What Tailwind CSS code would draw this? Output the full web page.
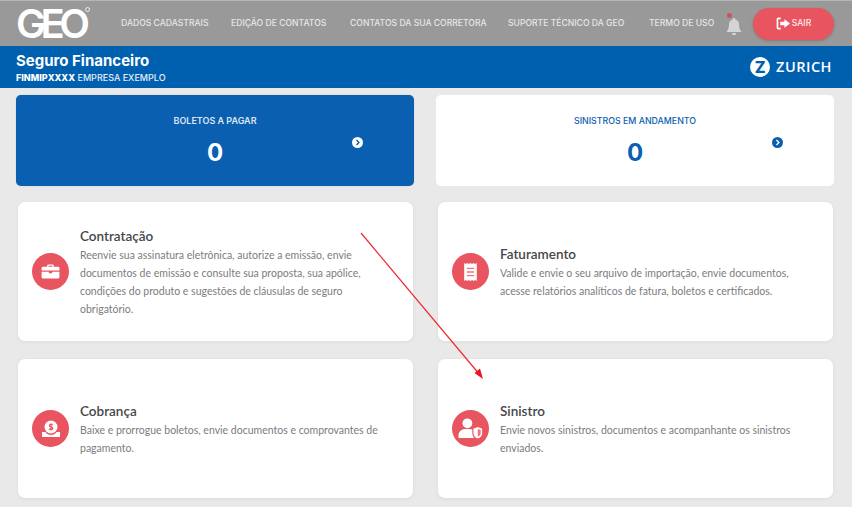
<!DOCTYPE html>
<html lang="pt-BR">
<head>
<meta charset="UTF-8">
<title>Seguro Financeiro</title>
<script src="https://cdn.jsdelivr.net/npm/@tailwindcss/browser@4"></script>
</head>
<body class="relative w-[852px] h-[507px] overflow-hidden bg-[#eae9ea] font-['Inter',sans-serif]">
  <!-- top nav -->
  <header class="flex items-center h-[46px] bg-[#999999] border-t border-[#b5b5b5] pl-[16px]">
    <div class="relative w-[74px] h-[38px] flex items-center">
      <span class="text-[40px] leading-[38px] font-semibold tracking-[-5.500px] text-white">GEO</span>
      <span class="absolute right-[0px] top-[2px] w-[5px] h-[5px] rounded-full border border-white/80"></span>
    </div>
    <nav class="flex items-center ml-[31px] text-[8.600px] font-medium text-[#e6e6e6] whitespace-nowrap">
      <a class="w-[110px]">DADOS CADASTRAIS</a>
      <a class="w-[119px]">EDIÇÃO DE CONTATOS</a>
      <a class="w-[158px]">CONTATOS DA SUA CORRETORA</a>
      <a class="w-[141px]">SUPORTE TÉCNICO DA GEO</a>
      <a class="w-[76px]">TERMO DE USO</a>
    </nav>
    <div class="relative ml-[1px] w-[16px] h-[22px] mt-[2px]">
      <svg viewBox="0 0 16 20" class="w-[16px] h-[20px] mt-[3px]" fill="#d4d4d4"><path d="M8 1c.9 0 1.400.6 1.400 1.400C11.800 3 13 5 13 7.500c0 3.500 1 5.500 2.500 7.500H.5C2 13 3 11 3 7.500 3 5 4.200 3 6.600 2.400 6.600 1.600 7.100 1 8 1zM5.800 16h4.400c0 1.300-1 2.200-2.200 2.200S5.800 17.300 5.800 16z"/></svg>
      <span class="absolute left-[1px] top-[-1px] w-[5px] h-[5px] rounded-full bg-[#c9565f]"></span>
    </div>
    <button class="flex items-center justify-center ml-[11px] w-[81px] h-[32px] rounded-full bg-[#e8545f] shadow-[0_1px_3px_rgba(0,0,0,0.2)] text-white/90 text-[8.600px] font-medium">
      <svg viewBox="0 0 16 14" class="w-[15px] h-[13px] mr-[1px]" fill="none"><path d="M5 1.500H2.500a1 1 0 0 0-1 1v9a1 1 0 0 0 1 1H5" stroke="#fff" stroke-width="1.800"/><path d="M4.500 5.200h4.500V2.500L15 7l-6 4.500V8.800H4.500z" fill="#fff"/></svg>
      SAIR
    </button>
  </header>

  <!-- blue title bar -->
  <section class="flex items-center justify-between h-[42px] bg-[#0060b0] pl-[16px] pr-[20px] text-white">
    <div>
      <h1 class="text-[15px] leading-[18px] font-bold">Seguro Financeiro</h1>
      <p class="mt-[3px] text-[9px] leading-[10px] font-medium text-white/90"><b class="font-extrabold text-white">FINMIPXXXX</b> EMPRESA EXEMPLO</p>
    </div>
    <div class="flex items-center gap-[6px]">
      <span class="flex items-center justify-center w-[20px] h-[20px] rounded-full bg-white text-[#0060b0] text-[16px] leading-none font-extrabold">Z</span>
      <span class="text-[14.500px] leading-none font-semibold font-['Open_Sans',sans-serif] tracking-[0.5px]">ZURICH</span>
    </div>
  </section>

  <!-- counters -->
  <section class="grid grid-cols-[398px_398px] gap-[22px] pl-[16px] pt-[7px]">
    <div class="grid grid-cols-[1fr_auto_1fr] items-center h-[91px] rounded-[5px] bg-[#0a5fb0] text-white shadow-[0_0_1px_rgba(0,0,0,0.3)]">
      <span></span>
      <div class="text-center -mt-[1px]">
        <p class="text-[9px] leading-[10px] font-semibold text-[#dbe6f3]">BOLETOS A PAGAR</p>
        <p class="mt-[15px] text-[24px] leading-[24px] font-bold">0</p>
      </div>
      <span class="justify-self-end mr-[51.500px] mt-[3px] flex items-center justify-center w-[11px] h-[11px] rounded-full bg-white">
        <svg viewBox="0 0 10 10" class="w-[7px] h-[7px]" fill="none" stroke="#0a5fb0" stroke-width="2"><path d="M3.500 1.500 7 5 3.500 8.500"/></svg>
      </span>
    </div>
    <div class="grid grid-cols-[1fr_auto_1fr] items-center h-[91px] rounded-[5px] bg-white text-[#0a5fb0]">
      <span></span>
      <div class="text-center -mt-[1px]">
        <p class="text-[8.800px] leading-[10px] font-medium">SINISTROS EM ANDAMENTO</p>
        <p class="mt-[15px] text-[24px] leading-[24px] font-bold">0</p>
      </div>
      <span class="justify-self-end mr-[51.500px] mt-[3px] flex items-center justify-center w-[11px] h-[11px] rounded-full bg-[#0a5fb0]">
        <svg viewBox="0 0 10 10" class="w-[7px] h-[7px]" fill="none" stroke="#fff" stroke-width="2"><path d="M3.500 1.500 7 5 3.500 8.500"/></svg>
      </span>
    </div>
  </section>

  <!-- menu cards -->
  <main class="grid grid-cols-[395.500px_395.500px] gap-x-[24.500px] gap-y-[18px] pl-[17.500px] pt-[16px] font-['Lato',sans-serif]">
    <article class="flex items-center h-[139px] rounded-[7px] bg-white shadow-[0_1px_4px_rgba(0,0,0,0.06)] pl-[14.500px] pr-[30px]">
      <span class="flex items-center justify-center shrink-0 w-[37px] h-[37px] rounded-full bg-[#e8545f]">
        <svg viewBox="0 0 20 16" class="w-[19px] h-[15px]"><path fill="#fff" d="M6.500 3V1.500A1 1 0 0 1 7.500.5h5a1 1 0 0 1 1 1V3H18a1.500 1.500 0 0 1 1.500 1.500V7h-19V4.500A1.500 1.500 0 0 1 2 3zm1.300 0h4.400V1.800H7.800zM.5 8.200h7.700v1.600h3.600V8.200h7.700v5.800a1.500 1.500 0 0 1-1.500 1.500H2A1.500 1.500 0 0 1 .5 14z"/></svg>
      </span>
      <div class="ml-[11px] mt-[1px]">
        <h2 class="text-[13.500px] leading-[18px] font-semibold text-[#45474b]">Contratação</h2>
        <p class="mt-[1px] text-[10.500px] leading-[18px] text-[#7c7c80]">Reenvie sua assinatura eletrônica, autorize a emissão, envie documentos de emissão e consulte sua proposta, sua apólice, condições do produto e sugestões de cláusulas de seguro obrigatório.</p>
      </div>
    </article>

    <article class="flex items-center h-[139px] rounded-[7px] bg-white shadow-[0_1px_4px_rgba(0,0,0,0.06)] pl-[14.500px] pr-[30px]">
      <span class="flex items-center justify-center shrink-0 w-[37px] h-[37px] rounded-full bg-[#e8545f]">
        <svg viewBox="0 0 14 20" class="w-[13px] h-[18px]"><path fill="#fff" d="M0 0l1.750 1L3.500 0l1.750 1L7 0l1.750 1L10.500 0l1.750 1L14 0v20l-1.750-1-1.750 1-1.750-1L7 20l-1.750-1-1.750 1-1.750-1L0 20z"/><path stroke="#f0737c" stroke-width="1.500" d="M3 6h8M3 10h8M3 14h8"/></svg>
      </span>
      <div class="ml-[11px] mt-[1px]">
        <h2 class="text-[13.500px] leading-[18px] font-semibold text-[#45474b]">Faturamento</h2>
        <p class="mt-[1px] text-[10.500px] leading-[18px] text-[#7c7c80]">Valide e envie o seu arquivo de importação, envie documentos, acesse relatórios analíticos de fatura, boletos e certificados.</p>
      </div>
    </article>

    <article class="flex items-center h-[139px] rounded-[7px] bg-white shadow-[0_1px_4px_rgba(0,0,0,0.06)] pl-[14.500px] pr-[30px]">
      <span class="flex items-center justify-center shrink-0 w-[37px] h-[37px] rounded-full bg-[#e8545f]">
        <svg viewBox="0 0 20 20" class="w-[20px] h-[20px]"><path fill="#fff" d="M1 13h3.500c1 2 3 3 5.500 3s4.500-1 5.500-3H19v5H1z"/><circle cx="10" cy="8" r="6.500" fill="#fff"/><g transform="translate(2 1.500) scale(.8)"><path fill="none" stroke="#e8545f" stroke-width="1.500" d="M12.200 5.800c-.5-.8-1.300-1.100-2.200-1.100-1.200 0-2.100.6-2.100 1.600 0 2.200 4.400 1.100 4.400 3.400 0 1-1 1.600-2.300 1.600-1 0-1.900-.4-2.400-1.200M10 3.500v9"/></g></svg>
      </span>
      <div class="ml-[11px] mt-[1px]">
        <h2 class="text-[13.500px] leading-[18px] font-semibold text-[#45474b]">Cobrança</h2>
        <p class="mt-[1px] text-[10.500px] leading-[18px] text-[#7c7c80]">Baixe e prorrogue boletos, envie documentos e comprovantes de pagamento.</p>
      </div>
    </article>

    <article class="flex items-center h-[139px] rounded-[7px] bg-white shadow-[0_1px_4px_rgba(0,0,0,0.06)] pl-[14.500px] pr-[30px]">
      <span class="flex items-center justify-center shrink-0 w-[37px] h-[37px] rounded-full bg-[#e8545f]">
        <svg viewBox="0 0 24 20" class="w-[25px] h-[21px]"><circle cx="9" cy="5" r="4.700" fill="#fff"/><path fill="#fff" d="M.5 19v-2.500C.5 13 3.500 10.500 7 10.500h4c1.200 0 2.300.3 3.200.8V15c0 1.600.6 3 1.600 4z"/><path fill="#fff" stroke="#e8545f" stroke-width="1" d="M19 8l4.700 1.800v4.400c0 2.800-2.100 5-4.700 5.800-2.600-.8-4.700-3-4.700-5.800V9.800z"/><path fill="#f0737c" d="M19 10.500l2.800 1v2.700c0 1.700-1.200 3-2.800 3.500z"/></svg>
      </span>
      <div class="ml-[11px] mt-[1px]">
        <h2 class="text-[13.500px] leading-[18px] font-semibold text-[#45474b]">Sinistro</h2>
        <p class="mt-[1px] text-[10.500px] leading-[18px] text-[#7c7c80]">Envie novos sinistros, documentos e acompanhante os sinistros enviados.</p>
      </div>
    </article>
  </main>

  <!-- annotation arrow on top of the page -->
  <svg class="absolute left-0 top-0 w-[852px] h-[507px] pointer-events-none" viewBox="0 0 852 507">
    <path d="M361 233 480 375" stroke="#f0282d" stroke-width="1.200" fill="none"/>
    <path d="M483 379 474.500 373 480 368.500z" fill="#f0141e"/>
  </svg>
</body>
</html>
